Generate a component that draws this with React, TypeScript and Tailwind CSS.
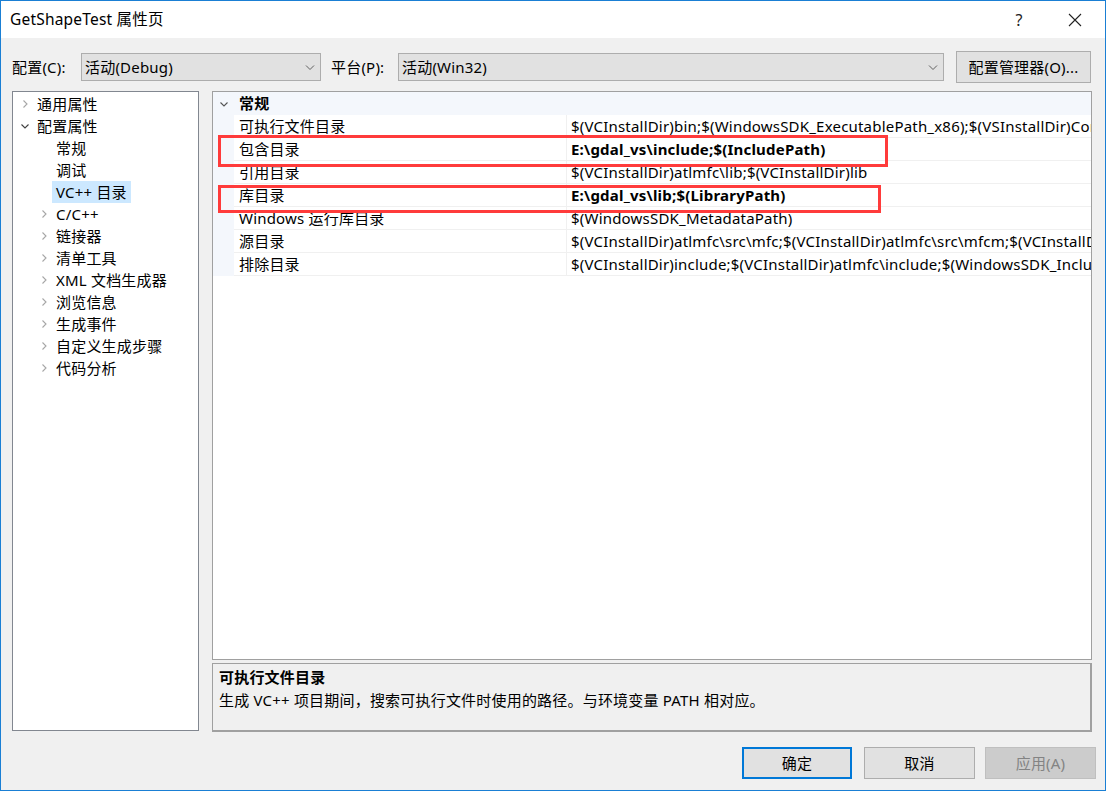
import React from "react";

const ChevClosed = () => (
  <svg width="12" height="12" viewBox="0 0 12 12">
    <path d="M4.5 2.5 L8 6 L4.5 9.5" stroke="#a6a6a6" strokeWidth="1.1" fill="none" />
  </svg>
);
const ChevOpen = ({ color = "#404040" }: { color?: string }) => (
  <svg width="12" height="12" viewBox="0 0 12 12">
    <path d="M2.5 4.5 L6 8 L9.5 4.5" stroke={color} strokeWidth="1.1" fill="none" />
  </svg>
);

const DownArrow = () => (
  <svg width="12" height="12" viewBox="0 0 12 12">
    <path d="M2 4.5 L6 8.5 L10 4.5" stroke="#606060" strokeWidth="1" fill="none" />
  </svg>
);

type TreeItem = { t: string; lvl: number; chev?: "open" | "closed"; sel?: boolean };
const tree: TreeItem[] = [
  { t: "通用属性", lvl: 0, chev: "closed" },
  { t: "配置属性", lvl: 0, chev: "open" },
  { t: "常规", lvl: 1 },
  { t: "调试", lvl: 1 },
  { t: "VC++ 目录", lvl: 1, sel: true },
  { t: "C/C++", lvl: 1, chev: "closed" },
  { t: "链接器", lvl: 1, chev: "closed" },
  { t: "清单工具", lvl: 1, chev: "closed" },
  { t: "XML 文档生成器", lvl: 1, chev: "closed" },
  { t: "浏览信息", lvl: 1, chev: "closed" },
  { t: "生成事件", lvl: 1, chev: "closed" },
  { t: "自定义生成步骤", lvl: 1, chev: "closed" },
  { t: "代码分析", lvl: 1, chev: "closed" },
];

const rows: { n: string; v: string; b?: boolean }[] = [
  { n: "可执行文件目录", v: "$(VCInstallDir)bin;$(WindowsSDK_ExecutablePath_x86);$(VSInstallDir)Common7\\Tools\\bin;$(VSInstallDir)Common7\\tools;$(VSInstallDir)Common7\\ide" },
  { n: "包含目录", v: "E:\\gdal_vs\\include;$(IncludePath)", b: true },
  { n: "引用目录", v: "$(VCInstallDir)atlmfc\\lib;$(VCInstallDir)lib" },
  { n: "库目录", v: "E:\\gdal_vs\\lib;$(LibraryPath)", b: true },
  { n: "Windows 运行库目录", v: "$(WindowsSDK_MetadataPath)" },
  { n: "源目录", v: "$(VCInstallDir)atlmfc\\src\\mfc;$(VCInstallDir)atlmfc\\src\\mfcm;$(VCInstallDir)atlmfc\\src\\atl;$(VCInstallDir)crt\\src" },
  { n: "排除目录", v: "$(VCInstallDir)include;$(VCInstallDir)atlmfc\\include;$(WindowsSDK_IncludePath);$(MSBuildToolsPath32)" },
];

export default function App() {
  return (
    <div className="relative w-[1106px] h-[791px] border border-[#1a7fd4] bg-[#f0f0f0] flex flex-col text-[15px] tracking-[0.2px] text-black [font-family:'Noto_Sans','Noto_Sans_CJK_SC',sans-serif] overflow-hidden">
      {/* Title bar */}
      <div className="h-[37px] bg-white flex items-center shrink-0">
        <div className="pl-[9px] text-[15.5px] leading-none">GetShapeTest 属性页</div>
        <div className="flex-1" />
        <div className="w-[20px] text-center text-[16px] mr-[38px] text-[#222]">?</div>
        <div className="mr-[22px] flex items-center">
          <svg width="16" height="16" viewBox="0 0 16 16">
            <path d="M2 2 L14 14 M14 2 L2 14" stroke="#222" strokeWidth="1.1" />
          </svg>
        </div>
      </div>

      {/* Config row */}
      <div className="mt-[13px] h-[32px] flex items-center pl-[11px] shrink-0">
        <div className="w-[69px]">配置(C):</div>
        <div className="w-[240px] h-[28px] bg-[#e1e1e1] border border-[#adadad] flex items-center pl-[3px] pr-[4px]">
          <span className="flex-1">活动(Debug)</span>
          <DownArrow />
        </div>
        <div className="ml-[10px] w-[67px]">平台(P):</div>
        <div className="w-[546px] h-[28px] bg-[#e1e1e1] border border-[#adadad] flex items-center pl-[3px] pr-[4px]">
          <span className="flex-1">活动(Win32)</span>
          <DownArrow />
        </div>
        <div className="ml-[12px] w-[135px] h-[32px] bg-[#e1e1e1] border border-[#adadad] flex items-center justify-center">
          配置管理器(O)...
        </div>
      </div>

      {/* Main */}
      <div className="mt-[8px] flex pl-[11px] shrink-0">
        {/* Tree */}
        <div className="w-[187px] h-[640px] bg-white border border-[#828790] pt-[1px]">
          {tree.map((it, i) => (
            <div key={i} className="h-[22px] flex items-center">
              <div style={{ width: 6 + it.lvl * 19 }} className="shrink-0" />
              <div className="w-[12px] h-[12px] flex items-center justify-center shrink-0">
                {it.chev === "open" ? <ChevOpen /> : it.chev === "closed" ? <ChevClosed /> : null}
              </div>
              <div className={`ml-[2px] h-[22px] flex items-center px-[4px] whitespace-nowrap ${it.sel ? "bg-[#cce8ff]" : ""}`}>
                {it.t}
              </div>
            </div>
          ))}
        </div>

        {/* Right column */}
        <div className="ml-[13px] w-[880px] flex flex-col">
          {/* Grid */}
          <div className="h-[569px] bg-white border border-[#a0a0a0] overflow-hidden">
            <div className="h-[23px] flex items-center bg-[#f4f7fc]">
              <div className="w-[21px] flex justify-center">
                <ChevOpen color="#555" />
              </div>
              <div className="pl-[5px] font-bold">常规</div>
            </div>
            {rows.map((r, i) => (
              <div key={i} className="h-[23px] flex">
                <div className="w-[21px] shrink-0 bg-[#f4f7fc]" />
                <div className="w-[333px] shrink-0 border-b border-r border-[#f0f0f0] pl-[5px] flex items-center whitespace-nowrap">
                  {r.n}
                </div>
                <div className={`flex-1 min-w-0 border-b border-[#f0f0f0] pl-[4px] flex items-center whitespace-nowrap overflow-hidden ${r.b ? "font-bold" : ""}`}>
                  {r.v}
                </div>
              </div>
            ))}
          </div>
          {/* Description */}
          <div className="mt-[3px] h-[69px] border border-[#a0a0a0] border-b-2 border-r-2 bg-[#f0f0f0] pl-[6px] pt-[2px]">
            <div className="font-bold h-[22px] flex items-center">可执行文件目录</div>
            <div className="h-[24px] flex items-center">生成 VC++ 项目期间，搜索可执行文件时使用的路径。与环境变量 PATH 相对应。</div>
          </div>
        </div>
      </div>

      {/* Buttons */}
      <div className="mt-[15px] h-[32px] flex justify-end pr-[9px] shrink-0">
        <div className="w-[110px] h-[32px] bg-[#e1e1e1] border-2 border-[#0078d7] flex items-center justify-center">确定</div>
        <div className="ml-[12px] w-[111px] h-[32px] bg-[#e1e1e1] border border-[#adadad] flex items-center justify-center">取消</div>
        <div className="ml-[10px] w-[111px] h-[32px] bg-[#cccccc] border border-[#bfbfbf] text-[#838383] flex items-center justify-center">应用(A)</div>
      </div>

      {/* Red annotation boxes */}
      <div className="absolute left-[217px] top-[134px] w-[670px] h-[32px] border-[3px] border-[#ff3b3b] pointer-events-none" />
      <div className="absolute left-[217px] top-[184px] w-[663px] h-[28px] border-[3px] border-[#ff3b3b] pointer-events-none" />
    </div>
  );
}
